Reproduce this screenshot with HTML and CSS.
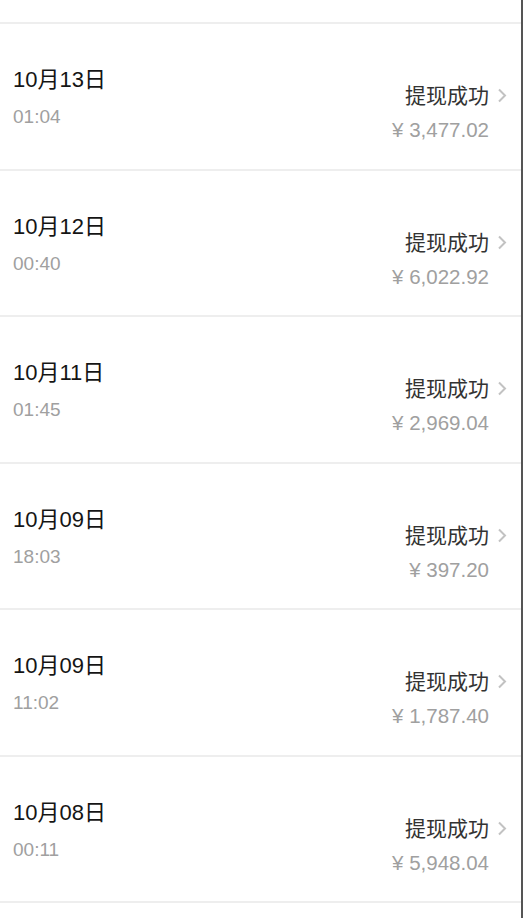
FILE: index.html
```html
<!DOCTYPE html>
<html lang="zh-CN">
<head>
    <meta charset="UTF-8">
    <meta name="viewport" content="width=device-width, initial-scale=1.0">
    <title>提现记录</title>
    <link rel="stylesheet" href="styles.css">
</head>
<body>
    <div id="list">
        <div class="row-tail"></div>

        <div class="record">
            <div class="record-left">
                <div class="record-date">10月13日</div>
                <div class="record-time">01:04</div>
            </div>
            <div class="record-right">
                <div class="record-status">提现成功<span class="chevron"><svg width="10" height="15" viewBox="0 0 10 15"><path d="M2 1.5 L8 7.5 L2 13.5" fill="none" stroke="#c2c2c2" stroke-width="2"/></svg></span></div>
                <div class="record-amount">¥ 3,477.02</div>
            </div>
        </div>

        <div class="record">
            <div class="record-left">
                <div class="record-date">10月12日</div>
                <div class="record-time">00:40</div>
            </div>
            <div class="record-right">
                <div class="record-status">提现成功<span class="chevron"><svg width="10" height="15" viewBox="0 0 10 15"><path d="M2 1.5 L8 7.5 L2 13.5" fill="none" stroke="#c2c2c2" stroke-width="2"/></svg></span></div>
                <div class="record-amount">¥ 6,022.92</div>
            </div>
        </div>

        <div class="record">
            <div class="record-left">
                <div class="record-date">10月11日</div>
                <div class="record-time">01:45</div>
            </div>
            <div class="record-right">
                <div class="record-status">提现成功<span class="chevron"><svg width="10" height="15" viewBox="0 0 10 15"><path d="M2 1.5 L8 7.5 L2 13.5" fill="none" stroke="#c2c2c2" stroke-width="2"/></svg></span></div>
                <div class="record-amount">¥ 2,969.04</div>
            </div>
        </div>

        <div class="record">
            <div class="record-left">
                <div class="record-date">10月09日</div>
                <div class="record-time">18:03</div>
            </div>
            <div class="record-right">
                <div class="record-status">提现成功<span class="chevron"><svg width="10" height="15" viewBox="0 0 10 15"><path d="M2 1.5 L8 7.5 L2 13.5" fill="none" stroke="#c2c2c2" stroke-width="2"/></svg></span></div>
                <div class="record-amount">¥ 397.20</div>
            </div>
        </div>

        <div class="record">
            <div class="record-left">
                <div class="record-date">10月09日</div>
                <div class="record-time">11:02</div>
            </div>
            <div class="record-right">
                <div class="record-status">提现成功<span class="chevron"><svg width="10" height="15" viewBox="0 0 10 15"><path d="M2 1.5 L8 7.5 L2 13.5" fill="none" stroke="#c2c2c2" stroke-width="2"/></svg></span></div>
                <div class="record-amount">¥ 1,787.40</div>
            </div>
        </div>

        <div class="record">
            <div class="record-left">
                <div class="record-date">10月08日</div>
                <div class="record-time">00:11</div>
            </div>
            <div class="record-right">
                <div class="record-status">提现成功<span class="chevron"><svg width="10" height="15" viewBox="0 0 10 15"><path d="M2 1.5 L8 7.5 L2 13.5" fill="none" stroke="#c2c2c2" stroke-width="2"/></svg></span></div>
                <div class="record-amount">¥ 5,948.04</div>
            </div>
        </div>

        <div class="record"></div>
    </div>
</body>
</html>
```

FILE: styles.css
```css
/* Page de base */
body {
    margin: 0;
    padding: 0;
    background: #ffffff;
    font-family: "Liberation Sans", "Noto Sans CJK SC", sans-serif;
    overflow: hidden;
}

/* Liste des retraits */
#list {
    width: 521px;
    height: 918px;
    border-right: 2px solid #555555;
    background: #ffffff;
    overflow: hidden;
}

/* Fin de la ligne précédente */
.row-tail {
    height: 22px;
}

/* Une ligne */
.record {
    display: flex;
    justify-content: space-between;
    align-items: flex-start;
    height: 144.5px;
    border-top: 2px solid #eeeeee;
    padding: 0 14px 0 13px;
}

.record-left {
    padding-top: 45px;
}

.record-date {
    font-size: 22px;
    line-height: 22px;
    color: #151515;
}

.record-time {
    margin-top: 16px;
    font-size: 19px;
    line-height: 19px;
    color: #a0a0a0;
}

.record-right {
    display: flex;
    flex-direction: column;
    align-items: flex-end;
    padding-top: 61px;
}

.record-status {
    display: flex;
    align-items: center;
    font-size: 21px;
    line-height: 21px;
    color: #333333;
}

.chevron {
    display: flex;
    margin-left: 8px;
}

.record-amount {
    margin-top: 14px;
    margin-right: 18px;
    font-size: 20.5px;
    line-height: 20px;
    color: #a0a0a0;
}
```
